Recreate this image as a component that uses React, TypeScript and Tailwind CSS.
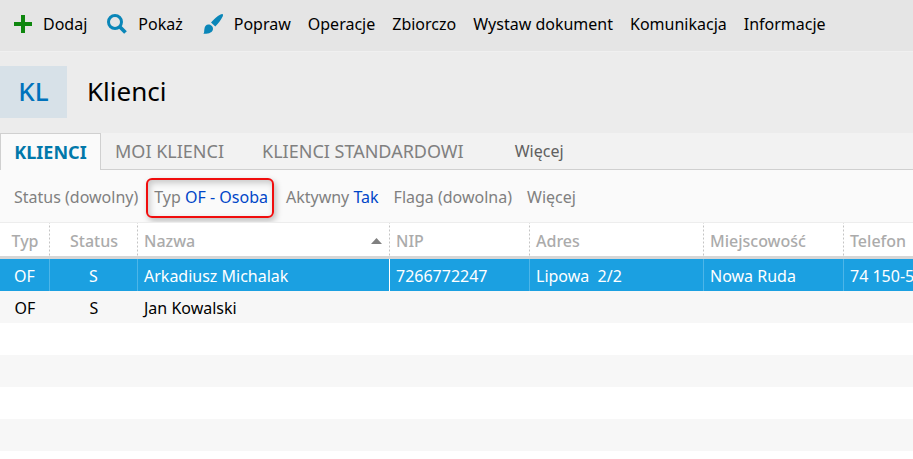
import React from 'react';
import clsx from 'clsx';

interface Client {
  type: string;
  status: string;
  name: string;
  nip: string;
  address: string;
  city: string;
  phone: string;
}

const clients: Client[] = [
  { type: 'OF', status: 'S', name: 'Arkadiusz Michalak', nip: '7266772247', address: 'Lipowa  2/2', city: 'Nowa Ruda', phone: '74 150-5' },
  { type: 'OF', status: 'S', name: 'Jan Kowalski', nip: '', address: '', city: '', phone: '' },
];

const menuItems = ['Operacje', 'Zbiorczo', 'Wystaw dokument', 'Komunikacja', 'Informacje'];

const columns = [
  { label: 'Typ', width: 'w-[50px]', center: true },
  { label: 'Status', width: 'w-[88px]', center: true },
  { label: 'Nazwa', width: 'w-[252px]', sorted: true },
  { label: 'NIP', width: 'w-[140px]' },
  { label: 'Adres', width: 'w-[174px]' },
  { label: 'Miejscowość', width: 'w-[140px]' },
  { label: 'Telefon', width: 'w-auto' },
];

const PlusIcon = () => (
  <svg width="18" height="18" viewBox="0 0 18 18" fill="#0f870f">
    <path d="M7 0h4v7h7v4h-7v7H7v-7H0V7h7z" />
  </svg>
);

const SearchIcon = () => (
  <svg width="20" height="20" viewBox="0 0 20 20" fill="none" stroke="#0a86b8">
    <circle cx="8" cy="8" r="6.5" strokeWidth="3" />
    <path d="M12.500 12.500l6 6" strokeWidth="3.800" />
  </svg>
);

const BrushIcon = () => (
  <svg width="20" height="20" viewBox="0 0 20 20" fill="#0a86b8">
    <path d="M19.700.3c.6.6.2 1.800-.3 2.800-1.700 3.600-4.300 6.800-7.100 9.400L8 8.500C10.800 5.400 14 2.500 17.500.6c.8-.4 1.700-.8 2.200-.3z" />
    <path d="M5.400 10.600c2.400 0 4.600 1.900 4.600 4.200 0 3.900-4.800 5.300-9.700 5 1.200-1.300.7-2.700 1.100-4.900.4-2.500 1.700-4.300 4-4.300z" />
  </svg>
);

const Toolbar = () => (
  <nav className="flex h-[51px] items-center gap-[17px] overflow-hidden bg-[#e5e5e5] pb-1 pl-3.5 whitespace-nowrap text-black">
    <div className="flex gap-5">
      <button className="flex items-center gap-[11px]"><PlusIcon />Dodaj</button>
      <button className="flex items-center gap-[11px]"><SearchIcon />Pokaż</button>
      <button className="flex items-center gap-[11px]"><BrushIcon />Popraw</button>
    </div>
    {menuItems.map((item) => (
      <button key={item}>{item}</button>
    ))}
  </nav>
);

const Header = () => (
  <header className="flex h-[82px] items-center gap-5 border-t border-[#f0f0f0] bg-[#ececec] pb-0.5">
    <div className="flex h-[52px] w-[67px] items-center justify-center bg-[#d7e1e8] pb-0.5 text-[26px] font-medium text-[#0072bc]">KL</div>
    <h1 className="pb-0.5 text-[26px] text-black">Klienci</h1>
  </header>
);

const Tabs = () => (
  <div className="flex h-[37px] items-stretch overflow-hidden bg-[#f2f2f2] whitespace-nowrap text-[#808080]">
    <button className="w-[101px] border-x border-t border-[#d0d0d0] bg-[#fafafa] text-[18px] font-bold text-[#0078aa]">KLIENCI</button>
    <div className="flex flex-1 border-b border-[#d0d0d0]">
      <button className="pl-3.5 text-[18px]">MOI KLIENCI</button>
      <button className="pl-[38px] text-[18px]">KLIENCI STANDARDOWI</button>
      <button className="pl-[51px] text-[#606060]">Więcej</button>
    </div>
  </div>
);

const Filters = () => (
  <div className="flex h-[53px] items-center overflow-hidden border-b border-[#ededed] bg-[#fafafa] pt-1 pl-3.5 whitespace-nowrap text-[#808080]">
    <button className="pb-0.5">Status (dowolny)</button>
    <button className="ml-2 h-10 rounded-md border-2 border-[#f00d0d] pr-1 pb-0.5 pl-1.5 shadow-[2px_3px_6px_rgba(0,0,0,0.25),inset_2px_3px_6px_rgba(0,0,0,0.2)]">
      Typ <span className="text-[#0046c8]">OF - Osoba</span>
    </button>
    <button className="ml-3 pb-0.5">Aktywny <span className="text-[#0046c8]">Tak</span></button>
    <button className="ml-[15px] pb-0.5">Flaga (dowolna)</button>
    <button className="ml-[15px] pb-0.5">Więcej</button>
  </div>
);

const ClientTable = () => (
  <table className="w-full table-fixed border-separate border-spacing-0 whitespace-pre">
    <thead>
      <tr className="text-[#ababab]">
        {columns.map((col) => (
          <th
            key={col.label}
            className={clsx(
              col.width,
              'h-9 border-b-3 border-[#d6d6d6] bg-[linear-gradient(#c4c4c4_50%,transparent_50%)] bg-size-[1px_4px] bg-right bg-repeat-y p-0 font-medium last:bg-none',
              !col.center && 'pl-1.5 text-left',
            )}
          >
            <div className={clsx('flex items-center pt-0.5', col.center ? 'justify-center' : 'justify-between pr-2')}>
              <span>{col.label}</span>
              {col.sorted && (
                <svg width="11" height="6" viewBox="0 0 11 6" fill="#808080"><path d="M5.500 0L11 6H0z" /></svg>
              )}
            </div>
          </th>
        ))}
      </tr>
    </thead>
    <tbody>
      {clients.map((c, idx) => (
        <tr key={idx} className={idx === 0 ? 'bg-[#1ba0e1] text-white' : 'bg-[#f7f7f7] text-black'}>
          {[c.type, c.status, c.name, c.nip, c.address, c.city, c.phone].map((value, i) => (
            <td
              key={i}
              className={clsx(
                'h-8 p-0 pt-0.5',
                i < 2 ? 'text-center' : 'pl-1.5',
                idx === 0 && i < 6 && 'border-r',
                i === 2 ? 'border-white' : 'border-[#4db5e8]',
              )}
            >
              {value}
            </td>
          ))}
        </tr>
      ))}
    </tbody>
  </table>
);

export default function App() {
  return (
    <div className="min-h-screen overflow-hidden bg-white font-['Noto_Sans',sans-serif] text-[16px] leading-6">
      <Toolbar />
      <Header />
      <Tabs />
      <Filters />
      <ClientTable />
      <div className="h-8 bg-white" />
      <div className="h-8 bg-[#f7f7f7]" />
      <div className="h-8 bg-white" />
      <div className="h-8 bg-[#f7f7f7]" />
    </div>
  );
}
